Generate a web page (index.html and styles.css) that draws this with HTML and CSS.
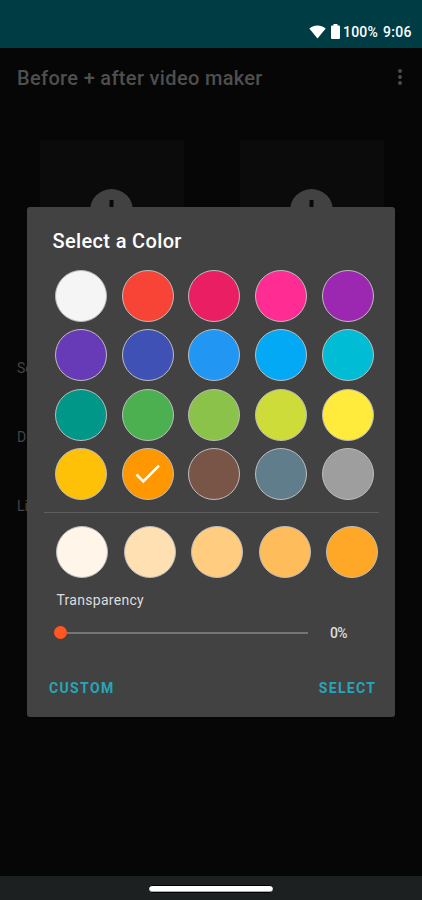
FILE: index.html
```html
<!DOCTYPE html>
<html lang="en">
<head>
<meta charset="utf-8">
<title>Before + after video maker</title>
<link rel="stylesheet" href="styles.css">
</head>
<body>
<div class="screen">
  <header class="status">
    <svg class="wifi" width="17" height="14" viewBox="0 0 17 14"><path d="M.3 3.6C5-.5 12-.5 16.7 3.6L8.5 13.6z" fill="#fff"/></svg>
    <svg class="battery" width="9" height="15" viewBox="0 0 9 15"><path d="M2.5 0h4v1.5H8q1 0 1 1V14q0 1-1 1H1q-1 0-1-1V2.500q0-1 1-1h1.500z" fill="#fff"/></svg>
    <span class="percent">100%</span>
    <span class="clock">9:06</span>
  </header>
  <div class="appbar">
    <h1 class="app-title">Before + after video maker</h1>
    <svg class="more" width="6" height="18" viewBox="0 0 6 18" fill="#4c4c4c"><circle cx="3" cy="2.900" r="2"/><circle cx="3" cy="9" r="2"/><circle cx="3" cy="15.100" r="2"/></svg>
  </div>
  <main class="content">
    <div class="photos">
      <div class="photo"><svg width="43" height="43" viewBox="0 0 43 43"><circle cx="21.500" cy="21.500" r="21.500" fill="#424242"/><path d="M21.500 11v21M11 21.500h21" stroke="#080808" stroke-width="4"/></svg></div>
      <div class="photo"><svg width="43" height="43" viewBox="0 0 43 43"><circle cx="21.500" cy="21.500" r="21.500" fill="#424242"/><path d="M21.500 11v21M11 21.500h21" stroke="#080808" stroke-width="4"/></svg></div>
    </div>
    <div class="options"><p>Se</p><p>Di</p><p>Li</p></div>
  </main>
  <footer class="navbar"><div class="handle"></div></footer>
  <section class="dialog">
    <h2 class="dialog-title">Select a Color</h2>
    <div class="palette">
      <i class="dot white"></i><i class="dot red"></i><i class="dot crimson"></i><i class="dot pink"></i><i class="dot purple"></i>
      <i class="dot violet"></i><i class="dot indigo"></i><i class="dot blue"></i><i class="dot sky"></i><i class="dot cyan"></i>
      <i class="dot teal"></i><i class="dot green"></i><i class="dot light-green"></i><i class="dot lime"></i><i class="dot yellow"></i>
      <i class="dot amber"></i><i class="dot orange"><svg width="26" height="20" viewBox="0 0 26 20"><path d="M1.500 10.500l6.800 6.800L24 1.600" fill="none" stroke="#fff" stroke-width="2.600"/></svg></i><i class="dot brown"></i><i class="dot slate"></i><i class="dot grey"></i>
    </div>
    <div class="divider"></div>
    <div class="shades">
      <i class="dot shade-1"></i><i class="dot shade-2"></i><i class="dot shade-3"></i><i class="dot shade-4"></i><i class="dot shade-5"></i>
    </div>
    <p class="label">Transparency</p>
    <div class="slider"><div class="thumb"></div><div class="track"></div><span class="value">0%</span></div>
    <div class="actions"><span class="custom">CUSTOM</span><span class="select">SELECT</span></div>
  </section>
</div>
</body>
</html>
```
FILE: styles.css
```css
* { box-sizing: border-box; }
body, h1, h2, p { margin: 0; }
body { background: #060606; font-family: Roboto, sans-serif; }
.screen { position: relative; width: 422px; height: 900px; overflow: hidden; display: flex; flex-direction: column; }
.status { height: 48px; background: #003c44; display: flex; align-items: flex-start; padding: 24px 0 0 309px; color: #fff; font-size: 14px; line-height: 17px; font-weight: 500; white-space: nowrap; }
.wifi { margin-top: 1px; flex: none; }
.battery { margin: 0 3px 0 5px; flex: none; }
.percent { width: 40px; letter-spacing: .2px; }
.clock { letter-spacing: .3px; }
.appbar { height: 59px; padding: 0 19px 0 17px; display: flex; align-items: center; justify-content: space-between; }
.app-title { font-size: 20px; line-height: 24px; font-weight: 500; letter-spacing: .33px; color: #4f4f4f; white-space: nowrap; }
.more { margin-bottom: 1px; }
.content { flex: 1; padding: 33px 38px 0 40px; }
.photos { display: flex; justify-content: space-between; }
.photo { width: 144px; height: 144px; background: #0b0b0b; border-radius: 3px; padding-top: 49px; display: flex; justify-content: center; align-items: flex-start; }
.photo svg { margin-right: 1px; }
.options { margin: 75px 0 0 -23px; font-size: 14px; line-height: 18px; color: #444; display: flex; flex-direction: column; gap: 51px; }
.navbar { height: 24px; background: #1c2020; display: flex; justify-content: center; padding-top: 9px; }
.handle { width: 126px; height: 8px; border: 1px solid #000; border-radius: 4px; background: #fff; box-shadow: inset 0 -1px #aaa; }
.dialog { position: absolute; left: 27px; top: 207px; width: 368.4px; height: 510px; background: #424242; border-radius: 3px; color: #fff; }
.dialog-title { padding: 21px 0 0 25.5px; font-size: 20px; line-height: 26px; font-weight: 500; letter-spacing: .35px; }
.palette { display: grid; grid-template-columns: repeat(5, 52px); column-gap: 14.7px; grid-auto-rows: 52px; row-gap: 7.500px; padding: 15.500px 0 0 28px; }
.dot { display: flex; align-items: center; justify-content: center; width: 52px; height: 52px; border: 1px solid #bdbdbd; border-radius: 50%; }
.white { background: #f5f5f5; }
.red { background: #f84437; }
.crimson { background: #e91e63; }
.pink { background: #ff2c93; }
.purple { background: #9c27b0; }
.violet { background: #673ab7; }
.indigo { background: #3f51b5; }
.blue { background: #2196f3; }
.sky { background: #03a9f4; }
.cyan { background: #00bcd4; }
.teal { background: #009688; }
.green { background: #4caf50; }
.light-green { background: #8bc34a; }
.lime { background: #cddc39; }
.yellow { background: #ffeb3b; }
.amber { background: #ffc107; }
.orange { background: #ff9800; }
.brown { background: #795548; }
.slate { background: #607d8b; }
.grey { background: #9e9e9e; }
.divider { height: 1px; margin: 12px 16px 0 17px; background: #5e5e5e; }
.shades { display: flex; gap: 15.600px; padding: 12.500px 0 0 29px; }
.shades .dot { flex: none; }
.shade-1 { background: #fff6e9; }
.shade-2 { background: #ffe0b2; }
.shade-3 { background: #ffcc80; }
.shade-4 { background: #ffbc5a; }
.shade-5 { background: #ffa726; }
.label { padding: 13.500px 0 0 29.5px; font-size: 14px; line-height: 18px; letter-spacing: .28px; color: #ddd; }
.slider { display: flex; align-items: center; height: 18px; margin: 14.500px 0 0 27px; }
.thumb { width: 13px; height: 13px; border-radius: 50%; background: #ff5722; }
.track { width: 241px; height: 2px; background: #757575; }
.value { margin-left: 22px; font-size: 14px; line-height: 18px; font-weight: 500; letter-spacing: -.8px; color: #ddd; }
.actions { display: flex; justify-content: space-between; padding: 37px 19px 0 22px; font-size: 14px; line-height: 18px; font-weight: 700; letter-spacing: 1.350px; color: #26a6b8; }
```
